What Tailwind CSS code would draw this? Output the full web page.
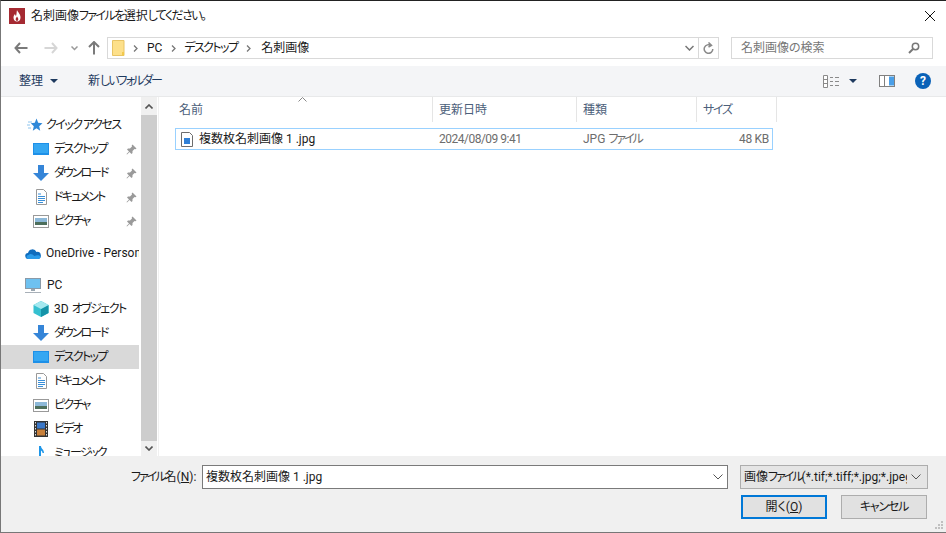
<!DOCTYPE html>
<html lang="ja">
<head>
  <meta charset="UTF-8" />
  <title>名刺画像ファイルを選択してください。</title>
  <script src="https://cdn.jsdelivr.net/npm/@tailwindcss/browser@4"></script>
</head>
<body class="bg-white font-['Roboto','Noto_Sans_CJK_JP',sans-serif] [font-feature-settings:'palt'] whitespace-nowrap text-[12px] text-[#1a1a1a] overflow-hidden">
<div class="relative w-[946px] h-[533px] flex flex-col border-t border-t-[#222] border-l border-l-[#777] border-b border-b-[#777] overflow-hidden">

  <!-- Title bar -->
  <div class="h-[29px] flex items-center pl-[8px] pr-[7px] shrink-0">
    <svg width="16" height="16" viewBox="0 0 16 16" class="shrink-0"><rect width="16" height="16" fill="#a52a32"/><path d="M8 2c1 2.500 3.500 4 3.500 7.500 0 2.500-1.500 4-3.500 4s-3.500-1.500-3.500-4c0-1.500.7-2.500 1.500-3.500.2 1 .5 1.500 1 2C7.800 6 7.500 4 8 2z" fill="#fff"/><path d="M8 8.500c.8 1 1.300 1.800 1.300 2.800S8.700 13 8 13s-1.300-.7-1.300-1.700S7.300 9.500 8 8.500z" fill="#a52a32"/></svg>
    <span class="ml-[6px] text-[12px] leading-none">名刺画像<span class="tracking-[-1.6px]">ファイルを</span>選択<span class="tracking-[-1.6px]">してください。</span></span>
    <svg width="12" height="12" viewBox="0 0 12 12" class="ml-auto mr-[3px]"><path d="M1 1l10 10M11 1L1 11" stroke="#111" stroke-width="1" fill="none"/></svg>
  </div>

  <!-- Navigation bar -->
  <div class="h-[36px] flex items-center shrink-0">
    <svg width="14" height="12" viewBox="0 0 14 12" class="ml-[13px]"><path d="M6 1L1.500 6 6 11M2 6h11.500" stroke="#7a7a7a" stroke-width="2" fill="none"/></svg>
    <svg width="14" height="12" viewBox="0 0 14 12" class="ml-[16px]"><path d="M8 1l4.500 5L8 11M12 6H.5" stroke="#d6d6d6" stroke-width="2" fill="none"/></svg>
    <svg width="7" height="5" viewBox="0 0 7 5" class="ml-[13px]"><path d="M.5 .5L3.500 3.500 6.500 .5" stroke="#9a9a9a" stroke-width="1.500" fill="none"/></svg>
    <svg width="12" height="14" viewBox="0 0 12 14" class="ml-[10px]"><path d="M1 6l5-5 5 5M6 1.500V13.500" stroke="#7a7a7a" stroke-width="2" fill="none"/></svg>
    <div class="ml-[7px] w-[612px] h-[22px] border border-[#d9d9d9] flex items-center">
      <svg width="13" height="16" viewBox="0 0 13 16" class="ml-[4px] shrink-0"><path d="M.5 .5h11.500v15H.5z" fill="#fde08a" stroke="#e8c465"/><path d="M10 12h2v3.500h-2z" fill="#f2c94c"/></svg>
      <svg width="5" height="7" viewBox="0 0 5 7" class="ml-[8px]"><path d="M1 .5L4 3.500 1 6.500" stroke="#777" stroke-width="1.300" fill="none"/></svg>
      <span class="ml-[9px]">PC</span>
      <svg width="5" height="7" viewBox="0 0 5 7" class="ml-[9px]"><path d="M1 .5L4 3.500 1 6.500" stroke="#777" stroke-width="1.300" fill="none"/></svg>
      <span class="ml-[8px] tracking-[-1.6px]">デスクトップ</span>
      <svg width="5" height="7" viewBox="0 0 5 7" class="ml-[9px]"><path d="M1 .5L4 3.500 1 6.500" stroke="#777" stroke-width="1.300" fill="none"/></svg>
      <span class="ml-[10px]">名刺画像</span>
      <svg width="9" height="6" viewBox="0 0 9 6" class="ml-auto mr-[4px]"><path d="M.5 1L4.500 5 8.500 1" stroke="#777" stroke-width="1.500" fill="none"/></svg>
      <div class="w-[20px] h-full border-l border-[#d9d9d9] flex items-center justify-center">
        <svg width="11" height="12" viewBox="0 0 11 12"><path d="M8 3.500A4.300 4.300 0 1 0 9.800 7M5.500 .5L8.500 3.300 5.500 5" stroke="#8a8a8a" stroke-width="1.500" fill="none"/></svg>
      </div>
    </div>
    <div class="ml-[12px] w-[202px] h-[22px] border border-[#d9d9d9] flex items-center pl-[9px] pr-[12px] text-[#767676]">
      <span>名刺画像の検索</span>
      <svg width="12" height="12" viewBox="0 0 12 12" class="ml-auto"><circle cx="7.500" cy="4.500" r="3.200" stroke="#777" stroke-width="1.500" fill="none"/><path d="M5 7L1 11" stroke="#777" stroke-width="2"/></svg>
    </div>
  </div>

  <!-- Toolbar -->
  <div class="h-[30px] bg-[#f4f5f7] border-b border-[#e8e9ea] flex items-center shrink-0 text-[#1e3a5f] box-content">
    <span class="ml-[18px]">整理</span>
    <svg width="8" height="4" viewBox="0 0 8 4" class="ml-[7px]"><path d="M0 0h8L4 4z" fill="#1e3a5f"/></svg>
    <span class="ml-[30px]">新<span class="tracking-[-2px]">しいフォルダー</span></span>
    <svg width="16" height="13" viewBox="0 0 16 13" class="ml-auto"><path d="M.5 .5h4v12h-4zM.5 4.500h4M.5 8.500h4" stroke="#8a8a8a" fill="#fff"/><path d="M7 2.500h3M12 2.500h4M7 6.500h3M12 6.500h4M7 10.500h3M12 10.500h4" stroke="#8a8a8a"/></svg>
    <svg width="8" height="4" viewBox="0 0 8 4" class="ml-[10px]"><path d="M0 0h8L4 4z" fill="#1e3a5f"/></svg>
    <svg width="16" height="12" viewBox="0 0 16 12" class="ml-[22px]"><rect x=".5" y=".5" width="15" height="11" fill="#fff" stroke="#808080"/><rect x="10" y="1.500" width="5" height="9" fill="#4a9fe8"/><path d="M5.500 1v10" stroke="#808080"/></svg>
    <div class="ml-[20px] mr-[15px] w-[16px] h-[16px] rounded-full bg-[#0a62b8] text-white text-[12px] font-bold flex items-center justify-center leading-none">?</div>
  </div>

  <!-- Main area -->
  <div class="flex-1 flex min-h-0">
    <!-- Sidebar -->
    <div class="w-[138px] shrink-0 overflow-hidden pt-[16px]">
      <div class="h-[24px] flex items-center pl-[26px]">
        <svg width="16" height="14" viewBox="0 0 16 14" class="shrink-0"><path d="M9.500 .5l1.700 4.300 4.300.4-3.300 3 1 4.500-3.700-2.400L5.800 12.700l1-4.500-3-3 4-.4z" fill="#2f88d8"/><path d="M1 4h4M0 7h3M1 10h3" stroke="#8cc4ee"/></svg>
        <span class="ml-[3px] tracking-[-1.5px]">クイック アクセス</span>
      </div>
      <div class="h-[24px] flex items-center pl-[32px]">
        <svg width="16" height="12" viewBox="0 0 16 12" class="shrink-0"><rect width="16" height="12" fill="#1e90e8"/><rect x="1" y="1" width="14" height="9" fill="#35a7f2"/></svg>
        <span class="ml-[5px] tracking-[-1.6px]">デスクトップ</span>
        <svg width="11" height="11" viewBox="0 0 11 11" class="ml-auto mr-[2px]"><path d="M6.500 .5l4 4-1 .8-1-.3-2 2 0 2-1 1L3.500 8 1 10.500 .5 10 3 7.500 1 5.500l1-1h2l2-2-.3-1z" fill="#9a9a9a"/></svg>
      </div>
      <div class="h-[24px] flex items-center pl-[32px]">
        <svg width="16" height="16" viewBox="0 0 16 16" class="shrink-0"><path d="M5 0h6v8h5l-8 8-8-8h5z" fill="#3585d8"/></svg>
        <span class="ml-[5px] tracking-[-2px]">ダウンロード</span>
        <svg width="11" height="11" viewBox="0 0 11 11" class="ml-auto mr-[2px]"><path d="M6.500 .5l4 4-1 .8-1-.3-2 2 0 2-1 1L3.500 8 1 10.500 .5 10 3 7.500 1 5.500l1-1h2l2-2-.3-1z" fill="#9a9a9a"/></svg>
      </div>
      <div class="h-[24px] flex items-center pl-[32px]">
        <svg width="16" height="16" viewBox="0 0 16 16" class="shrink-0"><path d="M3.500 .5h7l3 3v12h-10z" fill="#fff" stroke="#999"/><path d="M5 5h3M5 7.500h7M5 9.500h7M5 11.500h7M5 13.500h5" stroke="#3a8fd8"/></svg>
        <span class="ml-[5px] tracking-[-1.8px]">ドキュメント</span>
        <svg width="11" height="11" viewBox="0 0 11 11" class="ml-auto mr-[2px]"><path d="M6.500 .5l4 4-1 .8-1-.3-2 2 0 2-1 1L3.500 8 1 10.500 .5 10 3 7.500 1 5.500l1-1h2l2-2-.3-1z" fill="#9a9a9a"/></svg>
      </div>
      <div class="h-[24px] flex items-center pl-[32px]">
        <svg width="16" height="13" viewBox="0 0 16 13" class="shrink-0"><rect x=".5" y=".5" width="15" height="12" fill="#fff" stroke="#999"/><rect x="2" y="3" width="12" height="4" fill="#8cb8d8"/><rect x="2" y="7" width="12" height="3" fill="#4d6f5c"/></svg>
        <span class="ml-[5px] tracking-[-1.7px]">ピクチャ</span>
        <svg width="11" height="11" viewBox="0 0 11 11" class="ml-auto mr-[2px]"><path d="M6.500 .5l4 4-1 .8-1-.3-2 2 0 2-1 1L3.500 8 1 10.500 .5 10 3 7.500 1 5.500l1-1h2l2-2-.3-1z" fill="#9a9a9a"/></svg>
      </div>

      <div class="h-[24px] mt-[8px] flex items-center pl-[24px]">
        <svg width="16" height="11" viewBox="0 0 16 11" class="shrink-0"><path d="M3.500 11a3 3 0 0 1-.5-6A4.500 4.500 0 0 1 11.500 4 3.500 3.500 0 0 1 13 11z" fill="#0f6cbd"/><path d="M3.500 11a2 2 0 0 1 0-4c2-2 4-.5 6 1 2-1 5-1 6 .5 0 1.500-1 2.500-2.500 2.500z" fill="#2a9bea"/></svg>
        <span class="ml-[5px]">OneDrive - Personal</span>
      </div>

      <div class="h-[24px] mt-[8px] flex items-center pl-[24px]">
        <svg width="16" height="15" viewBox="0 0 16 15" class="shrink-0"><rect x=".5" y=".5" width="15" height="10" fill="#6ec1f0" stroke="#8a9aa8"/><path d="M6 11h4v2H6z" fill="#9aa6b0"/><path d="M0 14.500h16" stroke="#a8b0b8"/></svg>
        <span class="ml-[6px]">PC</span>
      </div>
      <div class="h-[24px] flex items-center pl-[32px]">
        <svg width="16" height="16" viewBox="0 0 16 16" class="shrink-0"><path d="M8 0l7.500 4v8L8 16 .5 12V4z" fill="#35c0d0"/><path d="M8 8l7.500-4v8L8 16z" fill="#1593a8"/><path d="M8 0l7.500 4L8 8 .5 4z" fill="#a5e8ef"/></svg>
        <span class="ml-[5px]">3D <span class="tracking-[-1.5px]">オブジェクト</span></span>
      </div>
      <div class="h-[24px] flex items-center pl-[32px]">
        <svg width="16" height="16" viewBox="0 0 16 16" class="shrink-0"><path d="M5 0h6v8h5l-8 8-8-8h5z" fill="#3585d8"/></svg>
        <span class="ml-[5px] tracking-[-2px]">ダウンロード</span>
      </div>
      <div class="h-[24px] flex items-center pl-[32px] bg-[#d9d9d9]">
        <svg width="16" height="12" viewBox="0 0 16 12" class="shrink-0"><rect width="16" height="12" fill="#1e90e8"/><rect x="1" y="1" width="14" height="9" fill="#35a7f2"/></svg>
        <span class="ml-[5px] tracking-[-1.6px]">デスクトップ</span>
      </div>
      <div class="h-[24px] flex items-center pl-[32px]">
        <svg width="16" height="16" viewBox="0 0 16 16" class="shrink-0"><path d="M3.500 .5h7l3 3v12h-10z" fill="#fff" stroke="#999"/><path d="M5 5h3M5 7.500h7M5 9.500h7M5 11.500h7M5 13.500h5" stroke="#3a8fd8"/></svg>
        <span class="ml-[5px] tracking-[-1.8px]">ドキュメント</span>
      </div>
      <div class="h-[24px] flex items-center pl-[32px]">
        <svg width="16" height="13" viewBox="0 0 16 13" class="shrink-0"><rect x=".5" y=".5" width="15" height="12" fill="#fff" stroke="#999"/><rect x="2" y="3" width="12" height="4" fill="#8cb8d8"/><rect x="2" y="7" width="12" height="3" fill="#4d6f5c"/></svg>
        <span class="ml-[5px] tracking-[-1.7px]">ピクチャ</span>
      </div>
      <div class="h-[24px] flex items-center pl-[32px]">
        <svg width="16" height="16" viewBox="0 0 16 16" class="shrink-0"><rect x="1" width="14" height="16" fill="#333"/><rect x="4" y="1.500" width="8" height="6" fill="#3b78c8"/><rect x="4" y="8.500" width="8" height="6" fill="#c8803a"/><path d="M2.500 1v14M13.500 1v14" stroke="#ddd" stroke-dasharray="1.500 1.500"/></svg>
        <span class="ml-[5px] tracking-[-2px]">ビデオ</span>
      </div>
      <div class="h-[24px] flex items-center pl-[32px]">
        <svg width="16" height="16" viewBox="0 0 16 16" class="shrink-0"><path d="M6 1h2c0 3 3 3 3 7h-1.500c0-1.500-.7-2-1.500-2.500V13H6z" fill="#1e96e8"/></svg>
        <span class="ml-[5px] tracking-[-2px]">ミュージック</span>
      </div>
    </div>

    <!-- Sidebar scrollbar -->
    <div class="ml-[2px] w-[16px] shrink-0 flex flex-col bg-[#cdcdcd]">
      <div class="h-[18px] bg-[#f0f0f0] flex items-center justify-center">
        <svg width="8" height="5" viewBox="0 0 8 5"><path d="M.5 4.500L4 1l3.500 3.500" stroke="#555" stroke-width="1.600" fill="none"/></svg>
      </div>
      <div class="flex-1"></div>
      <div class="h-[15px] bg-[#f0f0f0] flex items-center justify-center">
        <svg width="8" height="5" viewBox="0 0 8 5"><path d="M.5 .5L4 4 7.500 .5" stroke="#555" stroke-width="1.600" fill="none"/></svg>
      </div>
    </div>

    <!-- File list -->
    <div class="flex-1 border-l border-[#f0f0f0] ml-[1px] min-w-0">
      <div class="h-[25px] flex relative text-[#4c607a]">
        <svg width="9" height="5" viewBox="0 0 9 5" class="absolute left-[139px] top-0"><path d="M.5 4.500L4.500 .5l4 4" stroke="#888" fill="none"/></svg>
        <div class="w-[274px] pl-[20px] border-r border-[#e5e5e5] flex items-center">名前</div>
        <div class="w-[144px] pl-[6px] border-r border-[#e5e5e5] flex items-center">更新日時</div>
        <div class="w-[120px] pl-[6px] border-r border-[#e5e5e5] flex items-center">種類</div>
        <div class="w-[80px] pl-[6px] border-r border-[#e5e5e5] flex items-center"><span class="tracking-[-1.3px]">サイズ</span></div>
      </div>
      <div class="ml-[16px] mt-[6px] w-[598px] h-[22px] border border-[#99d1ff] flex items-center text-[#6d6d6d]">
        <div class="w-[257px] flex items-center pl-[5px] text-[#1a1a1a]">
          <svg width="12" height="15" viewBox="0 0 12 15" class="shrink-0"><path d="M.5 .5h8l3 3v11H.5z" fill="#fff" stroke="#6d6d6d"/><rect x="3" y="6" width="6" height="6" fill="#2f7fd6"/></svg>
          <span class="ml-[6px]">複数枚名刺画像 1 .jpg</span>
        </div>
        <div class="w-[144px] pl-[6px] tracking-[-0.5px]">2024/08/09 9:41</div>
        <div class="w-[120px] pl-[6px]">JPG <span class="tracking-[-2px]">ファイル</span></div>
        <div class="flex-1 text-right pr-[3px] tracking-[-0.3px]">48 KB</div>
      </div>
    </div>
  </div>

  <!-- Bottom bar -->
  <div class="h-[76px] bg-[#f0f0f0] shrink-0 relative pt-[9px] pl-[130px]">
    <div class="flex items-center h-[24px]">
      <span class="w-[71px]"><span class="tracking-[-2px]">ファイル</span>名(<span class="underline">N</span>):</span>
      <div class="w-[526px] h-[24px] bg-white border border-[#7a7a7a] flex items-center pl-[3px]">
        <span>複数枚名刺画像 1 .jpg</span>
        <svg width="10" height="6" viewBox="0 0 10 6" class="ml-auto mr-[4px]"><path d="M.5 .5L5 5 9.500 .5" stroke="#555" fill="none"/></svg>
      </div>
      <div class="ml-[12px] w-[188px] h-[24px] bg-[#e5e5e5] border border-[#adadad] flex items-center pl-[3px]">
        <span class="w-[163px] overflow-hidden">画像<span class="tracking-[-2px]">ファイル</span>(*.tif;*.tiff;*.jpg;*.jpeg</span>
        <svg width="10" height="6" viewBox="0 0 10 6" class="ml-[4px]"><path d="M.5 .5L5 5 9.500 .5" stroke="#555" fill="none"/></svg>
      </div>
    </div>
    <div class="flex mt-[6px] ml-[610px] gap-[14px]">
      <div class="w-[86px] h-[24px] bg-[#e1e1e1] border-2 border-[#0078d7] flex items-center justify-center">開く(<span class="underline">O</span>)</div>
      <div class="w-[86px] h-[24px] bg-[#e1e1e1] border border-[#adadad] flex items-center justify-center tracking-[-1.2px]">キャンセル</div>
    </div>
    <svg width="10" height="10" viewBox="0 0 10 10" class="absolute right-[2px] bottom-[2px]"><path d="M7 1h2v2H7zM4 4h2v2H4zM7 4h2v2H7zM1 7h2v2H1zM4 7h2v2H4zM7 7h2v2H7z" fill="#c0c0c0"/></svg>
  </div>
</div>
</body>
</html>
